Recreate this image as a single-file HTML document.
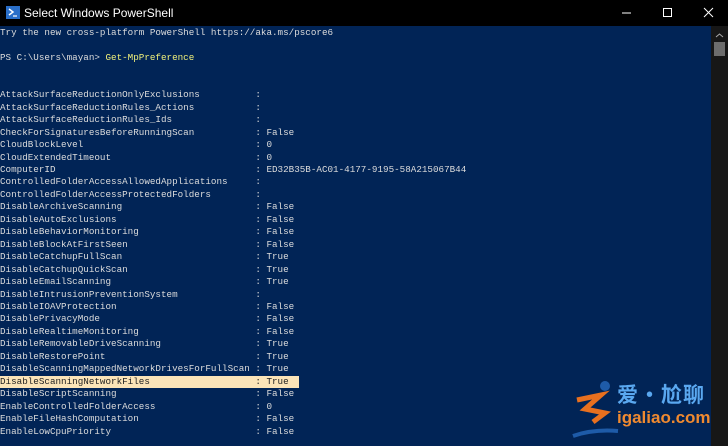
<!DOCTYPE html>
<html><head><meta charset="utf-8"><style>
body{margin:0;width:728px;height:446px;overflow:hidden;background:#012456;position:relative;font-family:"Liberation Mono",monospace;}
.tb{position:absolute;left:0;top:0;width:728px;height:26px;background:#000;color:#fff;font-family:"Liberation Sans",sans-serif;font-size:12px;}
.tb .t{position:absolute;left:24px;top:6px;}
.sb{position:absolute;left:711px;top:26px;width:17px;height:420px;background:#171717;}
pre{position:absolute;left:0;top:27px;margin:0;font-size:9.25px;line-height:12.45px;color:#dcdcdc;white-space:pre;}
.y{color:#f0f07a}
.hl{background:#fbe4b8;color:#222;display:inline-block;width:299px}
</style></head><body>
<div class="tb">
<svg style="position:absolute;left:6px;top:6px" width="14" height="13"><rect width="14" height="13" fill="#2a6fc9"/><path d="M3 3l4 3-4 3" stroke="#fff" stroke-width="1.5" fill="none"/><path d="M7 10h4" stroke="#fff" stroke-width="1.2"/></svg>
<span class="t">Select Windows PowerShell</span>
<svg style="position:absolute;left:620px;top:7px" width="100" height="12"><path d="M2 6h9" stroke="#fff"/><rect x="43.5" y="1.5" width="8" height="8" stroke="#fff" fill="none"/><path d="M84 1l9 9M93 1l-9 9" stroke="#fff"/></svg>
</div>
<div class="sb"><svg width="17" height="30"><path d="M5 11l3.5-3 3.5 3" stroke="#aaa" fill="none"/><rect x="3" y="16" width="11" height="14" fill="#6d6d6d"/></svg>
<svg style="position:absolute;top:404px" width="17" height="14"><path d="M5 5l3.5 3 3.5-3" stroke="#aaa" fill="none"/></svg></div>
<pre>Try the new cross-platform PowerShell https://aka.ms/pscore6

PS C:\Users\mayan&gt; <span class="y">Get-MpPreference</span>


AttackSurfaceReductionOnlyExclusions          :
AttackSurfaceReductionRules_Actions           :
AttackSurfaceReductionRules_Ids               :
CheckForSignaturesBeforeRunningScan           : False
CloudBlockLevel                               : 0
CloudExtendedTimeout                          : 0
ComputerID                                    : ED32B35B-AC01-4177-9195-58A215067B44
ControlledFolderAccessAllowedApplications     :
ControlledFolderAccessProtectedFolders        :
DisableArchiveScanning                        : False
DisableAutoExclusions                         : False
DisableBehaviorMonitoring                     : False
DisableBlockAtFirstSeen                       : False
DisableCatchupFullScan                        : True
DisableCatchupQuickScan                       : True
DisableEmailScanning                          : True
DisableIntrusionPreventionSystem              :
DisableIOAVProtection                         : False
DisablePrivacyMode                            : False
DisableRealtimeMonitoring                     : False
DisableRemovableDriveScanning                 : True
DisableRestorePoint                           : True
DisableScanningMappedNetworkDrivesForFullScan : True
<span class="hl">DisableScanningNetworkFiles                   : True</span>
DisableScriptScanning                         : False
EnableControlledFolderAccess                  : 0
EnableFileHashComputation                     : False
EnableLowCpuPriority                          : False</pre>
<svg style="position:absolute;left:565px;top:380px" width="55" height="58"><path d="M8 56q20-7 45-5" stroke="#1e5ba8" stroke-width="4" fill="none"/><circle cx="40" cy="6" r="5" fill="#1e5ba8"/><path d="M12 20l24-5-16 14 20 4-12 9" stroke="#e8701f" stroke-width="5" fill="none"/></svg>
<div style="position:absolute;left:617px;top:380px;font-family:'Noto Sans CJK SC',sans-serif;font-size:21px;line-height:28px;color:#5aa8f0;font-weight:bold;letter-spacing:1px">爱·尬聊</div>
<div style="position:absolute;left:617px;top:408px;font-family:'Liberation Sans',sans-serif;font-size:17px;color:#f08a30;font-weight:bold">igaliao.com</div>
</body></html>
